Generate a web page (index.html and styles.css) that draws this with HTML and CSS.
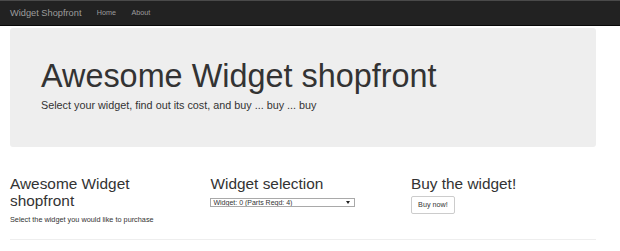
FILE: index.html
```html
<!DOCTYPE html>
<html lang="en">
<head>
  <meta charset="UTF-8" />
  <meta name="viewport" content="width=device-width, initial-scale=1.0"/>
  <title>Widget Shopfront</title>
  <link rel="stylesheet" href="styles.css">
</head>
<body>
  <nav class="navbar">
    <div class="nav-inner">
      <a class="brand" href="#">Widget Shopfront</a>
      <a class="nav-link" href="#">Home</a>
      <a class="nav-link" href="#">About</a>
    </div>
  </nav>

  <div class="container">
    <div class="jumbotron">
      <h1>Awesome Widget shopfront</h1>
      <p>Select your widget, find out its cost, and buy ... buy ... buy</p>
    </div>

    <div class="columns">
      <div class="col">
        <h2>Awesome Widget shopfront</h2>
        <p class="small-text">Select the widget you would like to purchase</p>
      </div>
      <div class="col">
        <h2>Widget selection</h2>
        <div class="select-wrap">
          <select class="widget-select">
            <option>Widget: 0 (Parts Reqd: 4)</option>
            <option>Widget: 1 (Parts Reqd: 6)</option>
            <option>Widget: 2 (Parts Reqd: 8)</option>
          </select>
          <span class="select-arrow"></span>
        </div>
      </div>
      <div class="col">
        <h2>Buy the widget!</h2>
        <button class="buy-btn" type="button">Buy now!</button>
      </div>
    </div>

    <hr class="divider">
  </div>
</body>
</html>
```

FILE: styles.css
```css
* {
  margin: 0;
  padding: 0;
  box-sizing: border-box;
}

body {
  font-family: 'Liberation Sans', Arial, sans-serif;
  color: #333;
  background: #fff;
  overflow: hidden;
}

.navbar {
  background: #222;
  border-top: 1px solid #4a4a4a;
  border-bottom: 1px solid #080808;
  height: 26px;
}

.nav-inner {
  display: flex;
  align-items: center;
  height: 24px;
  padding-left: 2.3px;
}

.navbar a {
  color: #9d9d9d;
  text-decoration: none;
  padding: 0 7.7px;
}

.brand {
  font-size: 9.25px;
  line-height: 10.3px;
}

.nav-link {
  font-size: 7.2px;
  line-height: 10.3px;
}

.container {
  width: 586px;
  margin-left: 10px;
}

.jumbotron {
  margin-top: 2px;
  background: #eee;
  border-radius: 3px;
  padding: 24.7px 31px;
}

.jumbotron h1 {
  font-size: 32.4px;
  line-height: 35.6px;
  font-weight: normal;
  margin: 6.8px 0 2.8px;
}

.jumbotron p {
  font-size: 10.8px;
  line-height: 15.4px;
  margin-bottom: 9px;
}

.columns {
  display: grid;
  grid-template-columns: repeat(3, 1fr);
  column-gap: 15.4px;
  padding-top: 28.5px;
}

.col h2 {
  font-size: 15.4px;
  line-height: 17px;
  font-weight: normal;
  margin-bottom: 5.1px;
}

.small-text {
  font-size: 7.3px;
  line-height: 10.3px;
}

.select-wrap {
  position: relative;
  width: 145px;
  height: 9px;
}

.widget-select {
  display: block;
  appearance: none;
  -webkit-appearance: none;
  width: 145px;
  height: 9px;
  border: 1px solid #a9a9a9;
  border-radius: 0;
  background: #fff;
  color: #333;
  font-family: 'Liberation Sans', Arial, sans-serif;
  font-size: 7px;
  line-height: 7px;
  padding: 0 2px;
  outline: none;
}

.select-arrow {
  position: absolute;
  right: 5px;
  top: 3px;
  width: 0;
  height: 0;
  border-left: 2px solid transparent;
  border-right: 2px solid transparent;
  border-top: 3px solid #222;
  pointer-events: none;
}

.buy-btn {
  display: block;
  margin-top: -1.6px;
  font-family: 'Liberation Sans', Arial, sans-serif;
  font-size: 7.2px;
  line-height: 10.3px;
  color: #333;
  background: #fff;
  border: 1px solid #ccc;
  border-radius: 2px;
  padding: 3px 6.2px;
  cursor: pointer;
}

.divider {
  border: 0;
  border-top: 1px solid #eee;
  margin-top: 14.4px;
}
```
